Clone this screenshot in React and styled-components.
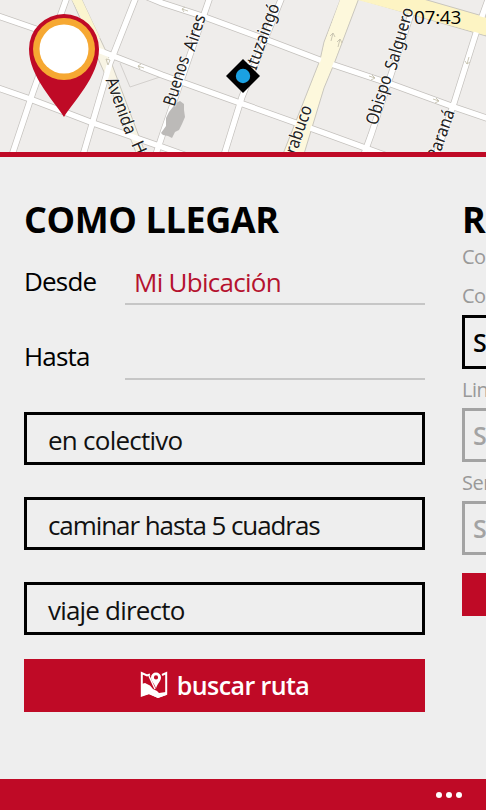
import React from "react";
import styled, { createGlobalStyle } from 'styled-components';

const GlobalStyle = createGlobalStyle`
  * { box-sizing: border-box; }
  body {
    margin: 0;
    background-color: #eeeeee;
    font-family: "Open Sans", "Noto Sans", sans-serif;
  }
`;

const Screen = styled.div`
  display: flex;
  flex-direction: column;
  width: 486px;
  height: 810px;
  overflow: hidden;
  background-color: #eeeeee;
`;

const MapArea = styled.header`
  position: relative;
  height: 157px;
  flex: none;
  border-bottom: 5px solid #bf0a26;

  svg { display: block; }
`;

const Clock = styled.time`
  position: absolute;
  top: 5px;
  right: 25px;
  font-size: 19px;
  line-height: 24px;
  letter-spacing: -0.3px;
`;

const Panorama = styled.main`
  display: flex;
  gap: 36px;
  flex: 1;
  padding: 42px 0 0 24px;
  overflow: hidden;
`;

const Section = styled.section`
  display: flex;
  flex-direction: column;
  flex: none;
  width: 402px;
`;

const Title = styled.h1`
  margin: 0;
  height: 42px;
  font-size: 36px;
  line-height: 42px;
  font-weight: 700;
  letter-spacing: -0.4px;
  white-space: nowrap;
`;

const Field = styled.label`
  display: flex;
  height: 75px;
  font-size: 26px;
  line-height: 34px;
`;

const FieldName = styled.span`
  width: 101px;
  padding-top: 23px;
  letter-spacing: -0.8px;
`;

const FieldValue = styled.span`
  width: 300px;
  height: 64px;
  padding: 24px 0 0 9px;
  border-bottom: 2px solid #c6c6c6;
  color: #b5122f;
  letter-spacing: -0.72px;
`;

const Options = styled.div`
  display: flex;
  flex-direction: column;
  gap: 32px;
  margin-top: 21px;
`;

const Option = styled.button`
  width: 401px;
  height: 53px;
  padding: 2px 0 0 21px;
  border: 3px solid #000;
  background: none;
  color: #111;
  font: inherit;
  font-size: 26px;
  line-height: 34px;
  text-align: left;
  letter-spacing: ${props => props.$spacing};
`;

const SearchButton = styled.button`
  display: flex;
  align-items: center;
  justify-content: center;
  gap: 9px;
  width: 401px;
  height: 53px;
  margin-top: 24px;
  padding: 0 0 1px;
  border: 0;
  background-color: #bf0a26;
  color: #fff;
  font: inherit;
  font-size: 25px;
  font-weight: 600;
  letter-spacing: -0.6px;
`;

const Caption = styled.div`
  height: ${props => props.$height};
  color: #999;
  font-size: 20px;
  line-height: 28px;
  letter-spacing: -0.5px;
`;

const Captions = styled.div`
  padding-top: 2px;
`;

const Picker = styled.div`
  height: 54px;
  margin-bottom: 7px;
  padding: 7px 0 0 8px;
  border: 3px solid ${props => props.$active ? '#000' : '#a3a3a3'};
  color: ${props => props.$active ? '#000' : '#a3a3a3'};
  font-size: 25px;
  line-height: 34px;
  font-weight: 600;
`;

const RedBlock = styled.div`
  height: 43px;
  margin-top: 11px;
  background-color: #bf0a26;
`;

const AppBar = styled.footer`
  display: flex;
  justify-content: flex-end;
  align-items: center;
  gap: 4px;
  flex: none;
  height: 31px;
  padding-right: 24px;
  background-color: #bf0a26;
`;

const Dot = styled.span`
  width: 6px;
  height: 6px;
  border-radius: 50%;
  background-color: #fff;
`;

const streets = [
  "M-5 15 L33 28 L103 52 L162 75 L240 103 L324 133 L390 157",
  "M-5 87 L30 99 L67 113 L93 123 L162 147 L190 157",
  "M145 -4 L162 3 L202 16 L262 38 L325 62 L391 84 L454 107 L495 121",
  "M67 -3 L33 92 L12 155",
  "M136 -3 L110 63 L83 155",
  "M210 -3 L164 130 L155 157",
  "M282 -3 L242 97 L224 155",
  "M414 5 L371 135 L363 157",
  "M489 -3 L476 33 L454 103 L436 155",
];

const labels = [
  { text: "Avenida", x: 105.5, y: 80, angle: 70, length: 59 },
  { text: "H", x: 131, y: 144, angle: 66, length: 13 },
  { text: "Buenos", x: 174.5, y: 107, angle: -73, length: 51 },
  { text: "Aires", x: 194.5, y: 52, angle: -72, length: 37 },
  { text: "Ituzaingó", x: 256, y: 71, angle: -70, length: 69 },
  { text: "rabuco", x: 296, y: 155, angle: -71, length: 50 },
  { text: "Obispo", x: 377, y: 126, angle: -73, length: 51 },
  { text: "Salguero", x: 396, y: 71, angle: -74, length: 64 },
  { text: "Paraná", x: 438, y: 161, angle: -71, length: 52 },
];

const CityMap = () => (
  <svg width="486" height="152" viewBox="0 0 486 152">
    <rect width="486" height="152" fill="#efedeb" />
    <path d="M120 63 L130 87 L160 77" fill="none" stroke="#d3d0cd" />
    {streets.map(d => <path key={d} d={d} fill="none" stroke="#c4c1bd" strokeWidth="6.8" />)}
    <path d="M72 0 L82 0 L111 62 L146 155 L137 155 L104 72 Z" fill="#f8f4e4" stroke="#c9c6bd" />
    <path d="M72 0 L82 0 L100 38 L92 38 Z" fill="#fbf5cf" />
    <path d="M341 -2 L324 42 L320 60 L283 154 L304 154 L324 88 L334 64 L359 -2 Z" fill="#fdf8dc" stroke="#c9c6bd" />
    <path d="M355 -2 L486 36 L486 17 L420 -2 Z" fill="#fdf4c3" stroke="#c9c6bd" />
    {streets.map(d => <path key={d} d={d} fill="none" stroke="#fff" strokeWidth="5.4" />)}
    <path d="M340 0 L325 42 L321 60 L285 152 L303 152 L323 88 L333 64 L357 0 Z" fill="#fdf8dc" />
    <path d="M358 0 L486 35 L486 18 L422 0 Z" fill="#fdf4c3" />
    <path d="M176 103 L180 101 L184 104 L184 110 L185 117 L182 124 L179 130 L175 132 L172 138 L168 136 L163 135 L161 133 L166 126 L166 118 L169 112 Z" fill="#bcbab8" />
    <g fill="none" stroke="#c5c1ae" strokeWidth="0.9">
      <path d="M331 41 l2 -8 m-3 3 l3 -3 l2 4 M338 47 l2 -8 m-3 3 l3 -3 l2 4" />
      <path d="M369 76 l6 2 m-3 -3 l3 3 l-4 2 M433 99 l6 2 m-3 -3 l3 3 l-4 2" />
      <path d="M469 57 l-2 7 m-2 -3 l2 3 l3 -2 M144 68 l-6 -2 m3 -2 l-3 2 l2 3" />
      <path d="M106 59 l4 1 l-2 5 z M188 11 l-6 -2 m3 -2 l-3 2 l2 3" />
    </g>
    <g fontFamily="Noto Sans, Open Sans, sans-serif" fontSize="17.5" fill="#222" stroke="#fff" strokeWidth="1.6" strokeOpacity="0.7" paintOrder="stroke">
      {labels.map(l => (
        <text key={l.text} textLength={l.length} lengthAdjust="spacingAndGlyphs" transform={`translate(${l.x} ${l.y}) rotate(${l.angle})`}>{l.text}</text>
      ))}
    </g>
    <path d="M64 117 C56 103 29 77 29 49 A35 35 0 0 1 99 49 C99 77 72 103 64 117 Z" fill="#bf0a26" />
    <circle cx="64" cy="49" r="31" fill="#f6a832" />
    <circle cx="64" cy="49" r="24.5" fill="#fff" />
    <path d="M243 59 L260 76 L243 93 L226 76 Z" fill="#000" />
    <circle cx="243" cy="76" r="7.2" fill="#1ba1e2" />
  </svg>
);

const RouteIcon = () => (
  <svg width="28" height="28" viewBox="0 0 28 28">
    <path d="M10 3.5 L7 4.5 L1.8 2 V24.5 L9 22 L18 26 L26.2 23 V2 L22 4" fill="none" stroke="#fff" strokeWidth="2" />
    <path d="M1.5 13 L5 12 L10 14.5 L13 18 L17 20 L19 22 L26 21 V24 L18 27 L9 23 L1.5 25 Z" fill="#fff" />
    <path d="M9 5 L15 18" stroke="#fff" strokeWidth="1.4" />
    <path fillRule="evenodd" d="M16 17.5 C15 13 11 10.5 11 6.5 A5 5 0 0 1 21 6.5 C21 10.5 17 13 16 17.5 Z M16 4.3 A2.1 2.1 0 1 0 16 8.5 A2.1 2.1 0 1 0 16 4.3 Z" fill="#fff" />
  </svg>
);

const App = () => {
  return (
    <>
      <GlobalStyle />
      <Screen>
        <MapArea>
          <CityMap />
          <Clock>07:43</Clock>
        </MapArea>
        <Panorama>
          <Section>
            <Title>COMO LLEGAR</Title>
            <Field>
              <FieldName>Desde</FieldName>
              <FieldValue>Mi Ubicación</FieldValue>
            </Field>
            <Field>
              <FieldName>Hasta</FieldName>
              <FieldValue />
            </Field>
            <Options>
              <Option $spacing="-0.75px">en colectivo</Option>
              <Option $spacing="-1.08px">caminar hasta 5 cuadras</Option>
              <Option $spacing="-0.8px">viaje directo</Option>
            </Options>
            <SearchButton><RouteIcon />buscar ruta</SearchButton>
          </Section>
          <Section>
            <Title>R</Title>
            <Captions>
              <Caption $height="39px">Co</Caption>
              <Caption $height="33px">Co</Caption>
            </Captions>
            <Picker $active>S</Picker>
            <Caption $height="32px">Lin</Caption>
            <Picker>S</Picker>
            <Caption $height="32px">Ser</Caption>
            <Picker>S</Picker>
            <RedBlock />
          </Section>
        </Panorama>
        <AppBar>
          <Dot />
          <Dot />
          <Dot />
        </AppBar>
      </Screen>
    </>
  );
}

export default App;
